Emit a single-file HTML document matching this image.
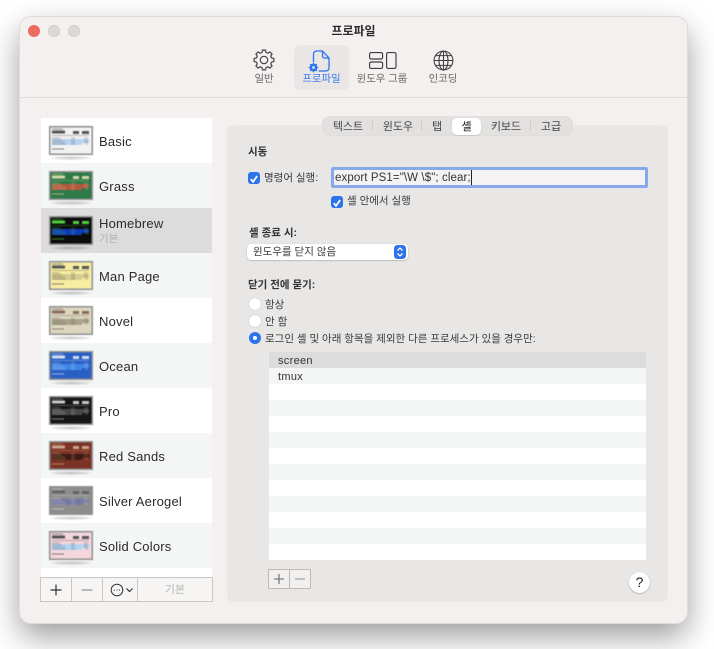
<!DOCTYPE html>
<html lang="ko">
<head>
<meta charset="utf-8">
<title>프로파일</title>
<style>
*{box-sizing:border-box;margin:0;padding:0}
html{background:#fff}
html,body{width:714px;height:649px;overflow:hidden}
body{position:relative;background:#fff;font-family:"Liberation Sans","Noto Sans CJK KR",sans-serif;color:#2b2b2b;-webkit-font-smoothing:antialiased;filter:blur(.3px)}
.a{position:absolute;white-space:nowrap}
#win{position:absolute;left:20px;top:17px;width:667px;height:606px;background:#f3f0ef;border-radius:11px;box-shadow:0 0 0 1px #dedcdb,0 13px 32px rgba(0,0,0,.4)}
.dot{position:absolute;width:12px;height:12px;border-radius:50%;top:25px;background:#dbd8d7;box-shadow:inset 0 0 0 .5px #cbc8c7}
.tb{font-size:10.400px;color:#6a6867;text-align:center;line-height:14px}
.row{position:absolute;left:41px;width:171px;height:45px}
.row svg{position:absolute;left:8px;top:8px;filter:blur(.4px)}
.row b{position:absolute;left:58px;top:16px;font-weight:400;font-size:13px;line-height:15px;letter-spacing:.2px;color:#2b2b2b;white-space:nowrap}
.ko11{font-size:10.500px;line-height:14px;color:#3a3a3a}
.lab{font-size:10.500px;line-height:14px;color:#333;font-weight:700}
.tab{position:absolute;top:120px;font-size:11px;line-height:14px;color:#444;text-align:center}
.sep{position:absolute;width:1px;background:#cfcdcc}
.radio{position:absolute;left:249px;width:12px;height:12px;border-radius:50%;background:#fff;box-shadow:0 0 1px rgba(0,0,0,.35)}
.chk{position:absolute;width:12px;height:12px;border-radius:3px;background:#2d74ea}
.lr{position:absolute;left:269px;width:377px;height:16px;font-size:11px;line-height:19px;padding-left:9px;letter-spacing:.3px;color:#333;overflow:hidden}
</style>
</head>
<body>
<svg width="0" height="0" style="position:absolute">
<defs>
<radialGradient id="refl"><stop offset="0" stop-color="#000" stop-opacity=".22"/><stop offset=".75" stop-color="#000" stop-opacity=".1"/><stop offset="1" stop-color="#000" stop-opacity="0"/></radialGradient>
<symbol id="th" viewBox="0 0 44 34">
<ellipse cx="22" cy="32" rx="22" ry="2" fill="url(#refl)"/>
<rect width="44" height="29" fill="#8f8f8f"/>
<rect x="1.500" y="1.500" width="41" height="26" style="fill:var(--bg)"/>
<rect x="3" y="2.600" width="11" height="1" style="fill:var(--t)" opacity=".5"/>
<rect x="3" y="4.500" width="13" height="3" style="fill:var(--h)"/>
<rect x="24" y="5" width="6" height="3" style="fill:var(--h)"/>
<rect x="33" y="5" width="7" height="3" style="fill:var(--h)"/>
<rect x="3" y="9" width="37" height="1" style="fill:var(--t)" opacity=".3"/>
<rect x="3" y="13" width="37" height="2" style="fill:var(--r)"/>
<rect x="3" y="15" width="37" height="2" style="fill:var(--r)"/>
<rect x="3" y="17" width="30" height="2" style="fill:var(--r)"/>
<rect x="3" y="11.500" width="8" height="1" style="fill:var(--t)" opacity=".35"/>
<rect x="3" y="13.500" width="10" height="1" style="fill:var(--t)" opacity=".3"/>
<rect x="3" y="15.500" width="13" height="1" style="fill:var(--t)" opacity=".3"/>
<rect x="3" y="17.500" width="14" height="1" style="fill:var(--t)" opacity=".3"/>
<rect x="22" y="11.500" width="4" height="1" style="fill:var(--t)" opacity=".3"/>
<rect x="22" y="13.500" width="4" height="1" style="fill:var(--t)" opacity=".3"/>
<rect x="22" y="15.500" width="4" height="1" style="fill:var(--t)" opacity=".3"/>
<rect x="22" y="17.500" width="4" height="1" style="fill:var(--t)" opacity=".3"/>
<rect x="35" y="11.500" width="4" height="1" style="fill:var(--t)" opacity=".3"/>
<rect x="35" y="13.500" width="4" height="1" style="fill:var(--t)" opacity=".3"/>
<rect x="35" y="15.500" width="4" height="1" style="fill:var(--t)" opacity=".3"/>
<rect x="36" y="17.500" width="3" height="1" style="fill:var(--t)" opacity=".3"/>
<rect x="3" y="22.500" width="12" height="1" style="fill:var(--t)" opacity=".6"/>
</symbol>
</defs>
</svg>

<div id="win"></div>
<div class="dot" style="left:28px;background:#ee6a5f;box-shadow:none"></div>
<div class="dot" style="left:48px"></div>
<div class="dot" style="left:68px"></div>
<div class="a" style="left:0;width:707px;top:23px;text-align:center;font-size:12px;line-height:16px;font-weight:700;color:#2a2a2a">프로파일</div>

<!-- toolbar -->
<div class="a" style="left:294px;top:45px;width:55px;height:45px;background:#e9e6e5;border-radius:6px"></div>
<svg class="a" style="left:253px;top:49px" width="22" height="22" viewBox="0 0 22 22" fill="none" stroke="#3c3c3c" stroke-width="1.150" stroke-linejoin="round">
<path d="M8.980 3.470 9.440 1.120H12.560L13.020 3.470 14.900 4.250 16.880 2.910 19.090 5.120 17.750 7.100 18.530 8.980 20.880 9.440V12.560L18.530 13.020 17.750 14.900 19.090 16.880 16.880 19.090 14.900 17.750 13.020 18.530 12.560 20.880H9.440L8.980 18.530 7.100 17.750 5.120 19.090 2.910 16.880 4.250 14.900 3.470 13.020 1.120 12.560V9.440L3.470 8.980 4.250 7.100 2.910 5.120 5.120 2.910 7.100 4.250Z"/>
<circle cx="11" cy="11" r="3.700"/>
</svg>
<svg class="a" style="left:307px;top:49px" width="30" height="24" viewBox="0 0 30 24" fill="none" stroke="#2a74f0" stroke-width="1.300">
<path d="M6.500 13V5a3 3 0 0 1 3-3h6l6.500 7V19a3 3 0 0 1-3 3H11.500"/>
<path d="M15.500 2v5a2 2 0 0 0 2 2H22"/>
<circle cx="6.500" cy="18.500" r="2.600" stroke-width="2.400"/>
<path d="M6.500 13.800v2M6.500 21.200v2M1.800 18.500h2M9.200 18.500h2M3.200 15.200l1.400 1.400M8.400 20.400l1.400 1.400M3.200 21.800l1.400-1.400M8.400 16.600l1.400-1.400" stroke-width="1.600"/>
</svg>
<svg class="a" style="left:368px;top:51px" width="29" height="19" viewBox="0 0 29 19" fill="none" stroke="#3c3c3c" stroke-width="1.150">
<rect x="1.600" y="1.600" width="13" height="6.400" rx="1.500"/>
<rect x="1.600" y="11" width="13" height="6.400" rx="1.500"/>
<rect x="18.600" y="1.600" width="9.400" height="15.800" rx="1.500"/>
</svg>
<svg class="a" style="left:433px;top:50px" width="21" height="21" viewBox="0 0 21 21" fill="none" stroke="#3c3c3c" stroke-width="1.050">
<circle cx="10.500" cy="10.500" r="9.400"/>
<ellipse cx="10.500" cy="10.500" rx="4.500" ry="9.400"/>
<path d="M10.500 1.100v18.800M1.100 10.500h18.800M2.600 5.600h15.800M2.600 15.400h15.800"/>
</svg>
<div class="a tb" style="left:244px;width:40px;top:73px">일반</div>
<div class="a tb" style="left:294px;width:55px;top:73px;color:#3f7cf0">프로파일</div>
<div class="a tb" style="left:350px;width:64px;top:73px">윈도우 그룹</div>
<div class="a tb" style="left:423px;width:40px;top:73px">인코딩</div>
<div class="a" style="left:20px;top:97px;width:667px;height:1px;background:#dcdad9"></div>

<!-- sidebar -->
<div class="a" style="left:41px;top:118px;width:171px;height:460px;background:#fff"></div>
<div class="row" style="top:118px"><svg width="44" height="34" style="--bg:#f2f2f2;--h:#555;--r:#b9d3f0;--t:#333"><use href="#th"/></svg><b>Basic</b></div>
<div class="row" style="top:163px;background:#f4f5f5"><svg width="44" height="34" style="--bg:#2f7a49;--h:#cfd8a8;--r:#b4573a;--t:#e6e6b0"><use href="#th"/></svg><b>Grass</b></div>
<div class="row" style="top:208px;background:#dcdcdc"><svg width="44" height="34" style="--bg:#0c0c0c;--h:#4fd13c;--r:#0f3bb8;--t:#5ed14a"><use href="#th"/></svg><b style="top:8px">Homebrew</b><span class="a" style="left:58px;top:24px;font-size:10.500px;line-height:14px;color:#b3b3b3">기본</span></div>
<div class="row" style="top:253px;background:#f4f5f5"><svg width="44" height="34" style="--bg:#f7eda3;--h:#555;--r:#d5cc8f;--t:#333"><use href="#th"/></svg><b>Man Page</b></div>
<div class="row" style="top:298px"><svg width="44" height="34" style="--bg:#dcd6bf;--h:#8a6b62;--r:#a9a488;--t:#5a4a40"><use href="#th"/></svg><b>Novel</b></div>
<div class="row" style="top:343px;background:#f4f5f5"><svg width="44" height="34" style="--bg:#2a5fc4;--h:#d3ddf0;--r:#3d86e6;--t:#e6eefa"><use href="#th"/></svg><b>Ocean</b></div>
<div class="row" style="top:388px"><svg width="44" height="34" style="--bg:#161616;--h:#c8c8c8;--r:#484848;--t:#d0d0d0"><use href="#th"/></svg><b>Pro</b></div>
<div class="row" style="top:433px;background:#f4f5f5"><svg width="44" height="34" style="--bg:#7c3226;--h:#c9a48e;--r:#3d1a14;--t:#e0c070"><use href="#th"/></svg><b>Red Sands</b></div>
<div class="row" style="top:478px"><svg width="44" height="34" style="--bg:#8d8d8d;--h:#666;--r:#7478a4;--t:#dedede"><use href="#th"/></svg><b>Silver Aerogel</b></div>
<div class="row" style="top:523px;background:#f4f5f5"><svg width="44" height="34" style="--bg:#f5d6dc;--h:#555;--r:#b4d4f2;--t:#333"><use href="#th"/></svg><b>Solid Colors</b></div>

<div class="a" style="left:40px;top:577px;width:173px;height:25px;background:#f6f5f4;border:1px solid #c9c7c6"></div>
<div class="sep" style="left:71px;top:578px;height:23px;background:#c9c7c6"></div>
<div class="sep" style="left:102px;top:578px;height:23px;background:#c9c7c6"></div>
<div class="sep" style="left:137px;top:578px;height:23px;background:#c9c7c6"></div>
<svg class="a" style="left:40px;top:577px" width="100" height="25" viewBox="0 0 100 25" fill="none">
<path d="M16 7.500v11M10.500 13h11" stroke="#333" stroke-width="1.200"/>
<path d="M41.500 13h11" stroke="#9a9a9a" stroke-width="1.300"/>
<circle cx="77" cy="13" r="5.800" stroke="#333" stroke-width="1"/>
<path d="M74 13h1M76.500 13h1M79 13h1" stroke="#333" stroke-width="1.100"/>
<path d="M86.500 11.500l3 3 3-3" stroke="#333" stroke-width="1.200"/>
</svg>
<div class="a" style="left:138px;top:583px;width:74px;text-align:center;font-size:11px;line-height:14px;color:#b5b5b5">기본</div>

<!-- main panel -->
<div class="a" style="left:228px;top:126px;width:439px;height:475px;background:#e8e7e6;border-radius:5px;box-shadow:0 0 0 1px #ebe9e8"></div>
<div class="a" style="left:323px;top:117px;width:249px;height:18px;background:#e3e1e0;border-radius:6px;box-shadow:0 0 0 .5px #d6d4d3"></div>
<div class="a" style="left:452px;top:118px;width:29px;height:17px;background:#fff;border-radius:5px;box-shadow:0 .5px 1px rgba(0,0,0,.2)"></div>
<div class="tab" style="left:323px;width:50px">텍스트</div>
<div class="sep" style="left:372px;top:121px;height:10px"></div>
<div class="tab" style="left:373px;width:50px">윈도우</div>
<div class="sep" style="left:421px;top:121px;height:10px"></div>
<div class="tab" style="left:422px;width:30px">탭</div>
<div class="tab" style="left:452px;width:29px;color:#222">셸</div>
<div class="tab" style="left:481px;width:50px">키보드</div>
<div class="sep" style="left:530px;top:121px;height:10px"></div>
<div class="tab" style="left:531px;width:40px">고급</div>

<div class="a lab" style="left:248px;top:145px">시동</div>
<div class="chk" style="left:248px;top:172px"><svg width="12" height="12" viewBox="0 0 12 12" fill="none" stroke="#fff" stroke-width="1.800"><path d="M2.800 6.200 5 8.800 9.200 3"/></svg></div>
<div class="a ko11" style="left:264px;top:171px">명령어 실행:</div>
<div class="a" style="left:331px;top:167px;width:317px;height:21px;background:#f4f2f3;border:3px solid #86a9ec;border-radius:2px"></div>
<div class="a" style="left:335px;top:171px;font-size:11.500px;line-height:14px;letter-spacing:.1px;color:#333">export PS1="\W \$"; clear;</div>
<div class="a" style="left:471px;top:170px;width:1px;height:15px;background:#222"></div>
<div class="chk" style="left:331px;top:196px"><svg width="12" height="12" viewBox="0 0 12 12" fill="none" stroke="#fff" stroke-width="1.800"><path d="M2.800 6.200 5 8.800 9.200 3"/></svg></div>
<div class="a ko11" style="left:347px;top:194px">셸 안에서 실행</div>

<div class="a lab" style="left:249px;top:226px">셸 종료 시:</div>
<div class="a" style="left:247px;top:244px;width:161px;height:16px;background:#fff;border-radius:4px;box-shadow:0 .5px 1.500px rgba(0,0,0,.3)"></div>
<div class="a ko11" style="left:253px;top:245px">윈도우를 닫지 않음</div>
<svg class="a" style="left:394px;top:245px" width="12" height="14" viewBox="0 0 12 14"><rect width="12" height="14" rx="3.500" fill="#2d74ea"/><path d="M3.500 5.500 6 3l2.500 2.500M3.500 8.500 6 11l2.500-2.500" fill="none" stroke="#fff" stroke-width="1.300"/></svg>

<div class="a lab" style="left:248px;top:278px">닫기 전에 묻기:</div>
<div class="radio" style="top:298px"></div>
<div class="a ko11" style="left:265px;top:298px">항상</div>
<div class="radio" style="top:315px"></div>
<div class="a ko11" style="left:265px;top:315px">안 함</div>
<div class="radio" style="top:332px;background:#2d74ea;box-shadow:none"></div>
<div class="a" style="left:253px;top:336px;width:4px;height:4px;border-radius:50%;background:#fff"></div>
<div class="a ko11" style="left:265px;top:332px">로그인 셸 및 아래 항목을 제외한 다른 프로세스가 있을 경우만:</div>

<!-- list -->
<div class="a" style="left:269px;top:352px;width:377px;height:208px;background:repeating-linear-gradient(#fff 0 16px,#f4f5f5 16px 32px)"></div>
<div class="lr" style="top:352px;background:#dcdcdc">screen</div>
<div class="lr" style="top:368px">tmux</div>

<div class="a" style="left:268px;top:569px;width:43px;height:20px;background:#f1f0ef;border:1px solid #bdbbba"></div>
<div class="sep" style="left:289px;top:570px;height:18px;background:#bdbbba"></div>
<svg class="a" style="left:268px;top:569px" width="43" height="20" viewBox="0 0 43 20" fill="none" stroke-width="1.100">
<path d="M11 5v10M6 10h10" stroke="#666"/><path d="M27 10h10" stroke="#999"/>
</svg>
<div class="a" style="left:629px;top:572px;width:21px;height:21px;border-radius:50%;background:#fff;box-shadow:0 .5px 1.500px rgba(0,0,0,.35);font-size:14px;line-height:21px;text-align:center;color:#222">?</div>
</body>
</html>
